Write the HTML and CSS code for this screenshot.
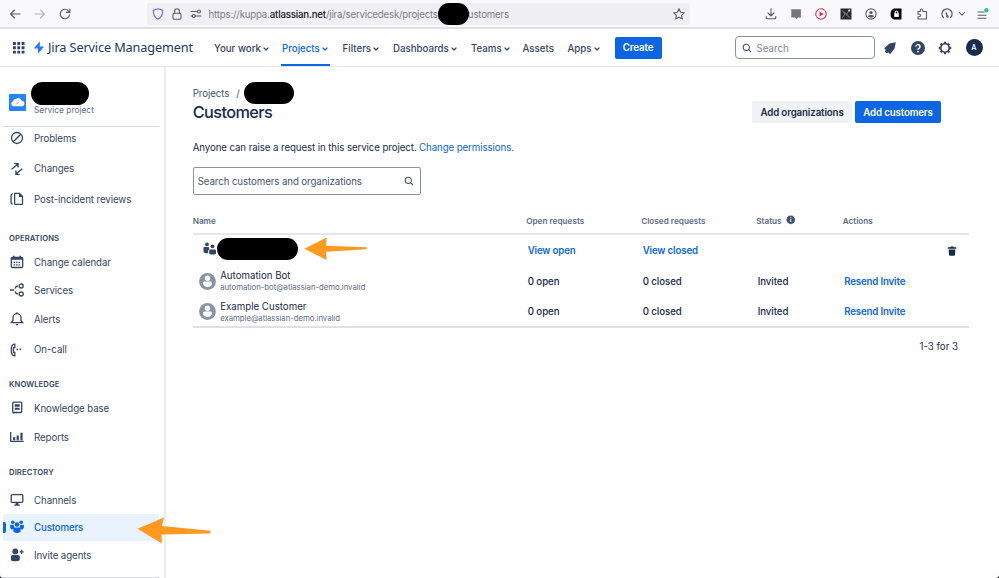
FILE: index.html
```html
<!DOCTYPE html>
<html lang="en">
<head>
<meta charset="utf-8">
<title>Customers - Jira Service Management</title>
<link rel="stylesheet" href="styles.css">
</head>
<body>
<header class="browser">
  <svg class="ic back" viewBox="0 0 12 12"><path d="M11 6H1.5M5.500 2L1.500 6l4 4"/></svg>
  <svg class="ic fwd" viewBox="0 0 12 12"><path d="M1 6h9.500M6.500 2l4 4-4 4"/></svg>
  <svg class="ic reload" viewBox="0 0 12 12"><path d="M10.600 6.500A4.700 4.700 0 1 1 9.300 2.700L10.800 4.200M10.900 1v3.400H7.500"/></svg>
  <div class="address">
    <svg class="ic shield" viewBox="0 0 12 12"><path d="M6 .7L10.700 2.300C10.900 6.500 9.500 9.500 6 11.300 2.500 9.500 1.100 6.500 1.300 2.300z"/></svg>
    <svg class="ic lock" viewBox="0 0 12 12"><rect x="2" y="5.200" width="8" height="6" rx="1.200"/><path d="M3.600 5.200V3.200a2.400 2.400 0 0 1 4.800 0v2"/></svg>
    <svg class="ic perm" viewBox="0 0 12 12"><path d="M1 3.500h6M5 8h6M1 8h1.500"/><circle cx="9" cy="3.500" r="1.500"/><circle cx="3.800" cy="8" r="1.500"/></svg>
    <span class="url">https://kuppa.<b>atlassian.net</b>/jira/servicedesk/projects/</span><span class="redact r-url"></span><span class="url tail">customers</span>
    <svg class="ic star" viewBox="0 0 12 12"><path d="M6 .8l1.600 3.400 3.700.5-2.700 2.600.7 3.700L6 9.200 2.700 11l.7-3.700L.7 4.700l3.700-.5z"/></svg>
  </div>
  <div class="tools">
    <svg class="ic" viewBox="0 0 12 12"><path d="M6 .8v7M3 5l3 3 3-3M1.200 8.500v1.200q0 1 1 1h7.600q1 0 1-1V8.500"/></svg>
    <svg class="ic" viewBox="0 0 12 12"><path d="M1.300 1.200h9.600v8.300H8l-1.500 1.700L5 9.500H1.300z" class="grey"/></svg>
    <svg class="ic red" viewBox="0 0 12 12"><circle cx="6" cy="6" r="5.200" stroke-dasharray="13 1.500"/><path class="solid" d="M4.500 3.400L8.700 6 4.500 8.600z"/></svg>
    <svg class="ic" viewBox="0 0 12 12"><path d="M.5.5h11v11H.5z" class="dark"/><path d="M2 2.500l3 3.500L2.500 9.500M9.500 9.500L6.500 6l2.500-3M4 4l5 5" class="lite"/><circle cx="9.300" cy="2.500" r="1.100" class="white"/></svg>
    <svg class="ic" viewBox="0 0 12 12"><circle cx="6" cy="6" r="5.100"/><circle cx="6" cy="4.600" r="1.700" class="solid"/><path class="solid" d="M2.900 8.500q.2-1.500 1.600-1.500h3q1.400 0 1.600 1.500Q6 10.800 2.900 8.500z"/></svg>
    <svg class="ic" viewBox="0 0 12 12"><path d="M4 .5h7.500v11H4Q.5 10.500.5 6T4 .5z" class="black"/><path class="white" d="M4.200 5.400h4.600v3.500H4.200z"/><path class="wline" d="M5.200 5.500V4.300a1.300 1.300 0 0 1 2.600 0v1.200"/></svg>
    <svg class="ic" viewBox="0 0 12 12"><path d="M2 3.500h2.300V2.200a1.200 1.200 0 0 1 2.500 0v1.300H10.500V11H2V8.800h1.300a1.200 1.200 0 0 0 0-2.500H2z"/></svg>
    <svg class="ic" viewBox="0 0 12 12"><path class="thick" d="M2.300 9.300A5 5 0 1 1 9.700 9.300"/><path class="thick" d="M5.200 5l1 3"/><circle cx="6.400" cy="8.500" r="1.200" class="solid"/></svg>
    <svg class="ic small" viewBox="0 0 8 8"><path d="M1.500 2.700L4 5.200l2.500-2.500"/></svg>
    <svg class="ic menu" viewBox="0 0 12 12"><path d="M1 4h6M1 7.200h8M1 10.300h8"/><circle cx="9.400" cy="2.200" r="2.200" class="green"/></svg>
  </div>
</header>

<nav class="topnav">
  <svg class="grid-ic" viewBox="0 0 12 12"><path d="M0 0h3v3H0zM4.500 0h3v3h-3zM9 0h3v3H9zM0 4.500h3v3H0zM4.500 4.500h3v3h-3zM9 4.500h3v3H9zM0 9h3v3H0zM4.500 9h3v3h-3zM9 9h3v3H9z"/></svg>
  <svg class="bolt" viewBox="0 0 10 13"><path d="M5.800.2L.4 6.700q-.5.700.3.700H3.900V12.800L9.500 6.200q.4-.7-.4-.7H5.800z"/></svg>
  <span class="brand">Jira Service Management</span>
  <div class="links">
    <a>Your work<svg viewBox="0 0 6 6"><path d="M1 2l2 2 2-2"/></svg></a>
    <a class="on">Projects<svg viewBox="0 0 6 6"><path d="M1 2l2 2 2-2"/></svg></a>
    <a>Filters<svg viewBox="0 0 6 6"><path d="M1 2l2 2 2-2"/></svg></a>
    <a>Dashboards<svg viewBox="0 0 6 6"><path d="M1 2l2 2 2-2"/></svg></a>
    <a>Teams<svg viewBox="0 0 6 6"><path d="M1 2l2 2 2-2"/></svg></a>
    <a>Assets</a>
    <a>Apps<svg viewBox="0 0 6 6"><path d="M1 2l2 2 2-2"/></svg></a>
  </div>
  <button class="btn create">Create</button>
  <div class="search"><svg viewBox="0 0 10 10"><circle cx="4.300" cy="4.300" r="3.100"/><path d="M6.600 6.600L9 9"/></svg>Search</div>
  <div class="actions">
    <svg viewBox="0 0 14 14"><path class="f" d="M12.800 1.300L6.500 2.600 1.200 7.200l1.600 1.600-.9 1.900 1.600 1.600 1.900-.9 1.600 1.800 4.600-5.700z"/></svg>
    <svg viewBox="0 0 14 14"><circle class="f" cx="7" cy="7" r="7"/><path class="q" d="M5 5.500a2 2 0 1 1 3 1.800q-1 .5-1 1.400"/><circle cx="7" cy="10.600" r=".9" fill="#fff"/></svg>
    <svg viewBox="0 0 14 14"><circle class="ring" cx="7" cy="7" r="4.200"/><path class="teeth" d="M7 .8v2.200M7 11v2.200M.8 7H3M11 7h2.200M2.600 2.600l1.600 1.600M9.800 9.800l1.600 1.600M2.600 11.400l1.600-1.600M9.800 4.200l1.600-1.600"/></svg>
    <span class="avatar">A</span>
  </div>
</nav>

<div class="body">
  <aside class="side">
    <div class="project">
      <svg class="cloud" viewBox="0 0 17 17"><rect width="17" height="17" rx="1" fill="#2684ff"/><path fill="#fff" d="M4.300 12.200A2.500 2.500 0 0 1 4.200 7.300 2.600 2.600 0 0 1 7 5a3.300 3.300 0 0 1 5.500 1.800 2.700 2.700 0 0 1 .5 5.400z"/><path d="M7.300 8.700l1.100 1 1-1" fill="none" stroke="#e2695f" stroke-width=".9"/></svg>
      <div><span class="redact r-proj"></span><p>Service project</p></div>
    </div>
    <ul class="list first">
      <li><svg viewBox="0 0 14 14"><circle cx="7" cy="7" r="5.500"/><path d="M3.300 10.700l7.400-7.400"/></svg>Problems</li>
      <li><svg viewBox="0 0 14 14"><path d="M1.600 7.200L7.800 2.200M4.300 1.700h3.800v3.800M12.400 6.800L6.200 11.800M9.700 12.300H5.900V8.500"/></svg>Changes</li>
      <li><svg viewBox="0 0 14 14"><path d="M4.600 1.300h4.900l3 3v7.200q0 .9-.9.900H5.500q-.9 0-.9-.9zM2.700 1.600q-1.600.4-1.600 2v6.800q0 1.600 1.600 1.700"/><path class="f" d="M9 1v4h4z"/></svg>Post-incident reviews</li>
    </ul>
    <h2>Operations</h2>
    <ul class="list ops">
      <li><svg viewBox="0 0 14 14"><rect x="1.300" y="2.300" width="11.400" height="10.200" rx="1"/><path class="f" d="M1 2.500h12v2.300H1zM3 .8h1.600v2H3zM9.400.8H11v2H9.400z"/><path stroke-dasharray="1.500 1" d="M3.600 7.300h7M3.600 9.800h7"/></svg>Change calendar</li>
      <li><svg viewBox="0 0 14 14"><circle cx="11.200" cy="3" r="2"/><circle cx="11.200" cy="11" r="2"/><path d="M0 7h4.200M5 5.500q.6-2.300 3-2.500M5 8.500q.6 2.300 3 2.500"/></svg>Services</li>
      <li><svg viewBox="0 0 14 14"><path d="M1.300 10.700L3 8.500V5.700a4 4 0 0 1 8 0v2.800l1.700 2.200zM7 .3v1.500M5.800 12.600h2.400"/></svg>Alerts</li>
      <li><svg viewBox="0 0 14 14"><path d="M4.800 1.200Q1.200 1 1.200 7t3.600 5.800V9.300H3.600Q2.800 7 3.600 4.700h1.200z"/><path stroke-width="1.600" stroke-dasharray="1.500 1.600" d="M6.600 6.400H12"/></svg>On-call</li>
    </ul>
    <h2 class="know">Knowledge</h2>
    <ul class="list">
      <li><svg viewBox="0 0 14 14"><rect x="2.700" y="1.200" width="9" height="10.300" rx="1"/><path class="f" d="M4.700 3.300h5v2.400h-5zM4.700 6.700h5v2h-5z"/><path d="M3.700 11.500v1.200"/></svg>Knowledge base</li>
      <li><svg viewBox="0 0 14 14"><path d="M.7 2v9.400h13"/><path stroke-width="2.200" d="M4.200 10.300V7.200M7.700 10.300V5.400M11.500 10.300V2.700"/></svg>Reports</li>
    </ul>
    <h2 class="dir">Directory</h2>
    <ul class="list last">
      <li><svg viewBox="0 0 14 14"><rect x="1.200" y="1.700" width="11.600" height="7.600" rx=".8"/><path class="f" d="M5.600 9.300h2.800v2.200h1.400v1.300H4.200v-1.300h1.400z"/></svg>Channels</li>
      <li class="sel"><svg viewBox="0 0 14 14"><g class="s"><circle cx="2.800" cy="2.200" r="1.800"/><circle cx="11.200" cy="2.200" r="1.800"/><circle cx="7" cy="4.500" r="2.300"/><path d="M0 6q0-1.300 1.200-1.300h2.300L4.300 7.300 2.800 9.600H1.500Q0 9 0 6zM14 6q0-1.300-1.200-1.300h-2.300L9.700 7.300l1.500 2.300h1.300Q14 9 14 6zM3.400 9q0-1.500 1.400-1.500h4.400q1.400 0 1.400 1.500v2.700q-3.600 2.800-7.200 0z"/></g></svg>Customers</li>
      <li><svg viewBox="0 0 14 14"><g class="s"><circle cx="5.300" cy="3.400" r="2.900"/><path d="M.9 8.700Q.9 7 2.500 7h5.700q1.600 0 1.600 1.700v3Q9 13.300 5.300 13.300T.9 11.700z"/></g><path d="M11.600 1.800v4M9.600 3.800h4"/></svg>Invite agents</li>
    </ul>
    <svg class="arrow a-side" viewBox="0 0 76 30"><path d="M.5 13.800L27 2.500 25 11 73.500 15.800v2.600L24.500 19.500 25 28.500z"/></svg>
  </aside>

  <main class="main">
    <div class="crumbs">Projects<i>/</i><span class="redact r-crumb"></span></div>
    <div class="title">
      <h1>Customers</h1>
      <div class="btns"><button class="btn plain">Add organizations</button><button class="btn">Add customers</button></div>
    </div>
    <p class="note">Anyone can raise a request in this service project. <a>Change permissions.</a></p>
    <div class="filter">Search customers and organizations<svg viewBox="0 0 10 10"><circle cx="4.300" cy="4.300" r="3.100"/><path d="M6.600 6.600L9 9"/></svg></div>
    <div class="table">
      <div class="row head"><span>Name</span><span>Open requests</span><span>Closed requests</span><span class="status">Status<svg viewBox="0 0 10 10"><circle cx="5" cy="5" r="5"/><path d="M5 4.400v3M5 2.400v1.100"/></svg></span><span>Actions</span></div>
      <div class="row">
        <div class="who group"><svg class="org" viewBox="0 0 14 14"><circle cx="4" cy="2.300" r="1.900"/><circle cx="9.500" cy="4.300" r="1.900"/><path d="M.5 6q0-1 1-1h4.200q.3 2 1 2.200-1.500 0-1.500 1.500v2.500Q.5 11.500.5 9.500zM6.200 8.500q0-1.100 1.100-1.100h4.500q1.200 0 1.200 1.100v3.200q-3.400 1.700-6.800 0z"/></svg><span class="redact r-org"></span>
        <svg class="arrow a-org" viewBox="0 0 64 24"><path d="M.5 11.700L22.700.5 22 8.800 62.700 10.300v2L22 14.800l.7 8.300z"/></svg></div>
        <a>View open</a><a>View closed</a><span></span><span></span>
        <svg class="trash" viewBox="0 0 10 10"><path d="M.8 1.200h2.400L3.700.4h2.600l.5.800h2.400v1.500H.8zM1.600 3.400h6.800L7.900 9q-.1.800-1 .8H3.100q-.9 0-1-.8z"/></svg>
      </div>
      <div class="row">
        <div class="who"><svg class="user" viewBox="0 0 17 17"><circle cx="8.500" cy="8.500" r="8.400"/><circle class="w" cx="8.500" cy="5.300" r="2.700"/><path class="w" d="M4.200 9.600q0-1.200 1.200-1.200h6.200q1.200 0 1.200 1.200v2.200q-1.500 2.200-4.300 2.200t-4.300-2.200z"/></svg><div><b>Automation Bot</b><small>automation-bot@atlassian-demo.invalid</small></div></div>
        <span>0 open</span><span>0 closed</span><span>Invited</span><a>Resend Invite</a>
      </div>
      <div class="row">
        <div class="who"><svg class="user" viewBox="0 0 17 17"><circle cx="8.500" cy="8.500" r="8.400"/><circle class="w" cx="8.500" cy="5.300" r="2.700"/><path class="w" d="M4.200 9.600q0-1.200 1.200-1.200h6.200q1.200 0 1.200 1.200v2.200q-1.500 2.200-4.300 2.200t-4.300-2.200z"/></svg><div><b>Example Customer</b><small>example@atlassian-demo.invalid</small></div></div>
        <span>0 open</span><span>0 closed</span><span>Invited</span><a>Resend Invite</a>
      </div>
    </div>
    <p class="count">1-3 for 3</p>
  </main>
</div>
</body>
</html>
```
FILE: styles.css
```css
* { box-sizing: border-box; margin: 0; padding: 0; }
html { background: #000; }
body {
  width: 999px; height: 578px; overflow: hidden; background: #fff;
  border-radius: 0 0 3px 3px;
  font: 400 9.7px/14px Inter, "Liberation Sans", sans-serif; color: #172b4d;
  letter-spacing: -.08px;
  display: flex; flex-direction: column;
}
svg { display: block; flex: none; overflow: visible; }
ul { list-style: none; }
button { font: inherit; letter-spacing: inherit; border: 0; }
.redact { display: block; background: #000; flex: none; }

/* Browser toolbar */
.browser { height: 29px; flex: none; background: #f9f9fb; border-bottom: 2px solid #e0e0e3; display: flex; align-items: center; padding-left: 8.500px; }
.ic { width: 12px; height: 12px; fill: none; stroke: #5b5b66; stroke-width: 1.1; stroke-linejoin: round; stroke-linecap: round; }
.ic .solid { fill: #5b5b66; stroke: none; }
.fwd { margin-left: 13px; stroke: #b5b5bb; }
.reload { margin-left: 13px; }
.address { width: 543px; height: 22px; margin: 1px 75px 0 76px; background: #f0f0f4; border-radius: 3px; display: flex; align-items: center; padding: 0 5px; }
.shield { stroke: #7168e8; }
.lock { margin-left: 7.500px; }
.perm { margin-left: 7px; }
.url { margin-left: 6.500px; color: #7c7c85; font-size: 9.7px; white-space: nowrap; width: 229px; letter-spacing: -.19px; padding-top: 1px; }
.url b { font-weight: 500; color: #15141a; }
.r-url { width: 31px; height: 22px; border-radius: 11px; margin-left: 0; z-index: 1; }
.url.tail { margin-left: -6px; width: auto; }
.star { margin-left: auto; }
.tools { display: flex; align-items: center; gap: 13.200px; }
.grey { fill: #77777a; stroke: none; }
.red { stroke: #e22850; }
.red .solid { fill: #e22850; }
.dark { fill: #24282d; stroke: none; }
.lite { stroke: #70757b; }
.white { fill: #fff; stroke: none; }
.black { fill: #000; stroke: none; }
.wline { stroke: #fff; }
.thick { stroke-width: 1.400; }
.green { fill: #2ac3a2; stroke: none; }
.small { width: 8px; height: 8px; margin: 0 -2px 0 -8px; }

/* Product navigation */
.topnav { height: 38px; flex: none; border-bottom: 1px solid #e4e6ea; display: flex; align-items: center; padding-left: 13px; font-weight: 500; color: #344563; letter-spacing: 0; }
.grid-ic { width: 11.500px; height: 11.500px; fill: #344563; }
.bolt { width: 10px; height: 13px; margin-left: 9.500px; fill: #1d7afc; }
.brand { width: 166px; margin: -2px 0 0 4px; font: 400 12.700px/18px "Noto Sans", sans-serif; letter-spacing: -.12px; color: #253858; white-space: nowrap; }
.links { display: grid; grid-template-columns: 68px 60.500px 50.500px 78px 51.500px 45px 47px; height: 37px; }
.links a { display: flex; align-items: center; gap: 2px; padding-top: 2px; white-space: nowrap; position: relative; }
.links svg { width: 6px; height: 6px; fill: none; stroke: #344563; stroke-width: 1.200; stroke-linecap: round; stroke-linejoin: round; }
.links .on { color: #0c66e4; }
.links .on svg { stroke: #0c66e4; }
.links .on::after { content: ""; position: absolute; left: -1.500px; width: 49px; height: 2px; bottom: 0; background: #0c66e4; }
.btn { height: 22px; padding-top: 1px; border-radius: 2px; background: #0c66e4; color: #fff; font-weight: 600; text-align: center; white-space: nowrap; letter-spacing: -.12px; }
.create { width: 47px; }
.search { width: 140px; height: 23px; margin-left: 73px; padding-top: 2px; border: 1px solid #8993a5; border-radius: 4px; display: flex; align-items: center; gap: 5px; padding-left: 6px; color: #7a869a; font-weight: 400; }
.search svg, .filter svg { width: 10px; height: 10px; margin-top: -2px; fill: none; stroke: #44546f; stroke-width: 1.100; }
.actions { display: flex; align-items: center; gap: 13.500px; margin-left: 8.500px; }
.actions svg { width: 14px; height: 14px; }
.f { fill: #344563; }
.q { fill: none; stroke: #fff; stroke-width: 1.500; }
.ring { fill: none; stroke: #344563; stroke-width: 1.600; }
.teeth { stroke: #344563; stroke-width: 2.300; }
.avatar { width: 17px; height: 17px; border-radius: 50%; background: #172b4d; color: #fff; font-size: 7.500px; line-height: 17px; text-align: center; }

/* Sidebar */
.body { display: flex; flex: 1; min-height: 0; }
.side { width: 166px; flex: none; border-right: 2px solid #ebecf0; position: relative; padding-left: 3px; color: #344563; }
.project { width: 156px; height: 60px; border-bottom: 1px solid #d5d9e0; display: flex; padding: 15px 0 0 6px; }
.cloud { width: 17px; height: 17px; margin-top: 12px; }
.project > div { margin-left: 5px; }
.r-proj { width: 58px; height: 23px; border-radius: 11.500px; }
.project p { font-size: 8.400px; line-height: 11px; margin: -.5px 0 0 3px; color: #5e6c84; letter-spacing: 0; }
.list { width: 156px; display: flex; flex-direction: column; gap: 7px; }
.list li { height: 22px; display: flex; align-items: center; gap: 10px; padding: 1px 0 0 7px; }
.list svg { width: 14px; height: 14px; margin-top: -1px; fill: none; stroke: #344563; stroke-width: 1.300; }
.list svg .f { stroke: none; }
.list .s { fill: #344563; stroke: none; }
.first { gap: 8.500px; }
.side h2 { font-size: 7.700px; line-height: 14px; font-weight: 600; letter-spacing: .08px; text-transform: uppercase; padding-top: 1px; height: 14px; margin: 21px 0 6px 6px; }
.ops { gap: 6px; }
.ops li:nth-child(3) { margin-top: 1px; }
.ops li:nth-child(4) { margin-top: 2.500px; }
.side .know { margin-top: 16.500px; }
.side .dir { margin: 17px 0 10px 6px; }
.last { gap: 3px; border-bottom: 1px solid #d5d9e0; height: 89px; }
.list .sel { height: 27px; padding-top: 0; background: #e9f2ff; color: #0c66e4; border-radius: 2px; position: relative; font-weight: 500; letter-spacing: -.15px; }
.sel::before { content: ""; position: absolute; left: 0; top: 8px; width: 3px; height: 11px; background: #0c66e4; border-radius: 0 2px 2px 0; }
.list .sel .s { fill: #0c66e4; }
.arrow { position: absolute; fill: #ff991f; }
.a-side { left: 137px; top: 447.500px; width: 76px; height: 30px; z-index: 2; }

/* Customers page */
.main { flex: 1; padding: 19px 30px 0 26.700px; }
.crumbs { height: 14px; padding-top: 1px; display: flex; align-items: center; color: #44546f; }
.crumbs i { font-style: normal; margin: 0 4.500px 0 7px; }
.r-crumb { width: 50px; height: 22px; margin: -1px 0 0 -.5px; border-radius: 11px; }
.title { display: flex; justify-content: space-between; height: 23px; }
h1 { font-size: 16.300px; line-height: 25px; font-weight: 500; letter-spacing: -.6px; }
.btns { display: flex; gap: 3px; margin: 1px 28px 0 0; }
.btns .btn { width: 86px; }
.btns .plain { width: 100px; background: #f1f2f4; color: #172b4d; }
a { color: inherit; }
.note { margin: 18px 0 12px; line-height: 14px; letter-spacing: -.09px; }
.note a, .row a { color: #0c66e4; }
.filter { width: 228px; height: 28px; border: 1px solid #8993a5; border-radius: 2px; padding: 2px 6px 0 4px; display: flex; align-items: center; justify-content: space-between; color: #44546f; letter-spacing: -.09px; }
.table { margin-top: 12px; border-bottom: 2px solid #dfe1e6; height: 121px; }
.row { display: grid; grid-template-columns: 335px 115px 115px 86.500px 98px 1fr; height: 30.500px; align-items: center; }
.row > :nth-child(n+2) { font-weight: 500; }
.row > a:nth-child(n+2) { font-weight: 600; letter-spacing: -.16px; }
.head { height: 28px; padding-top: 1px; border-bottom: 2px solid #e4e6ea; color: #5e6c84; font-size: 8.200px; margin-bottom: 1px; letter-spacing: 0; }
.row.head > * { font-weight: 600; }
.head > :nth-child(n+2) { margin-left: -1.500px; }
.status { display: flex; align-items: center; gap: 4px; }
.status svg { width: 9.500px; height: 9.500px; fill: #44546f; stroke: #fff; margin-top: -1px; }
.who { display: flex; align-items: center; position: relative; padding-left: 7px; height: 30px; }
.group { margin-top: -4px; }
.org { width: 14px; height: 14px; margin-left: 3px; fill: #344563; }
.r-org { width: 81px; height: 22px; border-radius: 11px; }
.a-org { left: 111px; top: 3px; width: 64px; height: 24px; }
.user { width: 17px; height: 17px; margin: -1px 0 0 -.5px; fill: #8993a5; }
.user .w { fill: #fff; }
.who div { margin-left: 4px; }
.who b { display: block; font-weight: 400; line-height: 12px; letter-spacing: 0; }
.who small { display: block; font-size: 7.800px; line-height: 11px; color: #5e6c84; letter-spacing: -.05px; }
.trash { width: 10px; height: 10px; margin: -1px 0 0 5px; fill: #172b4d; }
.count { margin: 12px 11px 0 0; text-align: right; letter-spacing: 0; }
```
